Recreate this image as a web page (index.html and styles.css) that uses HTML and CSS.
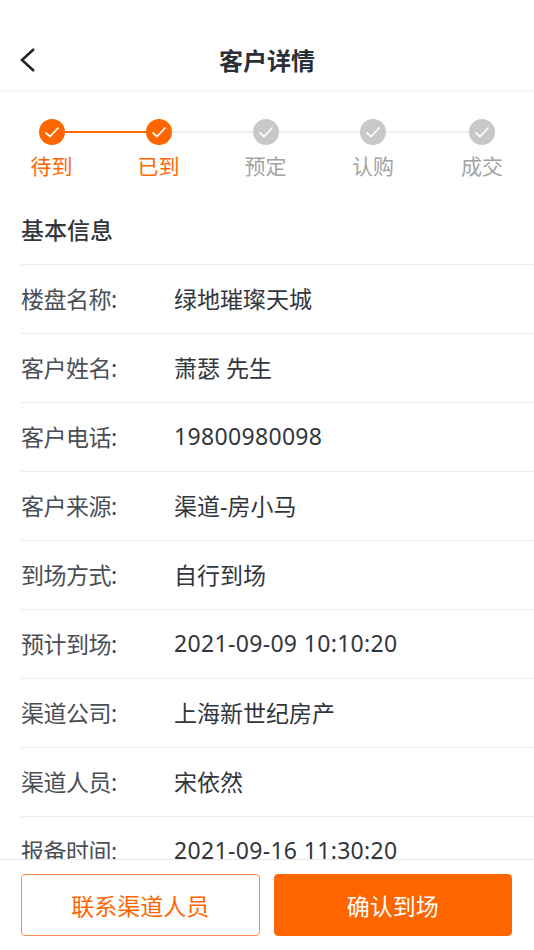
FILE: index.html
```html
<!DOCTYPE html>
<html lang="zh-CN">
<head>
<meta charset="utf-8">
<title>客户详情</title>
<link rel="stylesheet" href="styles.css">
</head>
<body>
<div class="page">
  <header class="header">
    <svg class="back" width="16" height="26" viewBox="0 0 16 26"><path d="M15 2 L3 13 L15 24" fill="none" stroke="#22262e" stroke-width="2.6"/></svg>
    <h1 class="title">客户详情</h1>
  </header>
  <main class="content">
    <div class="steps">
      <div class="step done"><span class="dot"><svg width="16" height="14" viewBox="0 0 16 14"><path d="M1.5 7.5 L6 11.5 L14.5 2.5" fill="none" stroke="#fff" stroke-width="1.7"/></svg></span><span class="label">待到</span></div>
      <div class="step done"><span class="dot"><svg width="16" height="14" viewBox="0 0 16 14"><path d="M1.5 7.5 L6 11.5 L14.5 2.5" fill="none" stroke="#fff" stroke-width="1.7"/></svg></span><span class="label">已到</span></div>
      <div class="step"><span class="dot"><svg width="16" height="14" viewBox="0 0 16 14"><path d="M1.5 7.5 L6 11.5 L14.5 2.5" fill="none" stroke="#fff" stroke-width="1.7"/></svg></span><span class="label">预定</span></div>
      <div class="step"><span class="dot"><svg width="16" height="14" viewBox="0 0 16 14"><path d="M1.5 7.5 L6 11.5 L14.5 2.5" fill="none" stroke="#fff" stroke-width="1.7"/></svg></span><span class="label">认购</span></div>
      <div class="step"><span class="dot"><svg width="16" height="14" viewBox="0 0 16 14"><path d="M1.5 7.5 L6 11.5 L14.5 2.5" fill="none" stroke="#fff" stroke-width="1.7"/></svg></span><span class="label">成交</span></div>
    </div>
    <section class="info">
      <h2 class="section-title">基本信息</h2>
      <div class="row"><span class="key">楼盘名称:</span><span class="val">绿地璀璨天城</span></div>
      <div class="row"><span class="key">客户姓名:</span><span class="val">萧瑟 先生</span></div>
      <div class="row"><span class="key">客户电话:</span><span class="val num">19800980098</span></div>
      <div class="row"><span class="key">客户来源:</span><span class="val">渠道-房小马</span></div>
      <div class="row"><span class="key">到场方式:</span><span class="val">自行到场</span></div>
      <div class="row"><span class="key">预计到场:</span><span class="val num">2021-09-09 10:10:20</span></div>
      <div class="row"><span class="key">渠道公司:</span><span class="val">上海新世纪房产</span></div>
      <div class="row"><span class="key">渠道人员:</span><span class="val">宋依然</span></div>
      <div class="row"><span class="key">报备时间:</span><span class="val num">2021-09-16 11:30:20</span></div>
    </section>
  </main>
  <footer class="footer">
    <button class="btn outline">联系渠道人员</button>
    <button class="btn solid">确认到场</button>
  </footer>
</div>
</body>
</html>
```
FILE: styles.css
```css
* { box-sizing: border-box; }
html, body { margin: 0; padding: 0; background: #fff; }
body { font-family: "Noto Sans", "Noto Sans CJK SC", sans-serif; color: #32363d; }
.page { width: 534px; height: 950px; display: flex; flex-direction: column; overflow: hidden; }
.header { height: 92px; flex: none; position: relative; display: flex; align-items: flex-end; justify-content: center; padding-bottom: 11px; border-bottom: 2px solid #f7f7f7; }
.back { position: absolute; left: 19px; top: 47px; }
.title { margin: 0; font-size: 24px; line-height: 36px; font-weight: 700; color: #2b2f36; }
.content { flex: 1; min-height: 0; overflow: hidden; }
.steps { display: grid; grid-template-columns: 107px 107px 107px 108px 110px; margin-left: -2px; height: 116px; }
.step { position: relative; display: flex; flex-direction: column; align-items: center; }
.step::before { content: ""; position: absolute; top: 39px; left: 50%; width: 100%; height: 2px; background: #f0f0f0; }
.step:last-child::before { display: none; }
.step:first-child::before { background: #ff6600; }
.step .dot { position: relative; width: 26px; height: 26px; border-radius: 50%; background: #c8c8c8; display: flex; align-items: center; justify-content: center; margin-top: 27px; }
.step .label { font-size: 21px; line-height: 30px; color: #a3a3a3; margin-top: 6px; }
.step.done .dot { background: #ff6600; }
.step.done .label { color: #ff6600; }
.info { margin-left: 21px; }
.section-title { margin: 0; height: 57px; font-size: 23px; font-weight: 500; line-height: 44px; color: #32363d; border-bottom: 1px solid #ececec; }
.row { display: flex; align-items: center; height: 69px; padding-bottom: 2px; border-bottom: 1px solid #ececec; font-size: 23px; }
.key { width: 153px; flex: none; color: #4a4e55; letter-spacing: -0.5px; }
.val { color: #32363d; }
.num { letter-spacing: 0.33px; }
.footer { flex: none; height: 91px; border-top: 1px solid #e8e8e8; padding: 14px 22px 0 21px; display: flex; gap: 14px; align-items: flex-start; background: #fff; }
.btn { flex: 1; height: 62px; border-radius: 4px; font: inherit; font-size: 23px; padding: 0; }
.outline { background: #fff; border: 1px solid #ff8c4a; color: #ff6600; }
.solid { background: #ff6600; border: 1px solid #ff6600; color: #fff; }
```
